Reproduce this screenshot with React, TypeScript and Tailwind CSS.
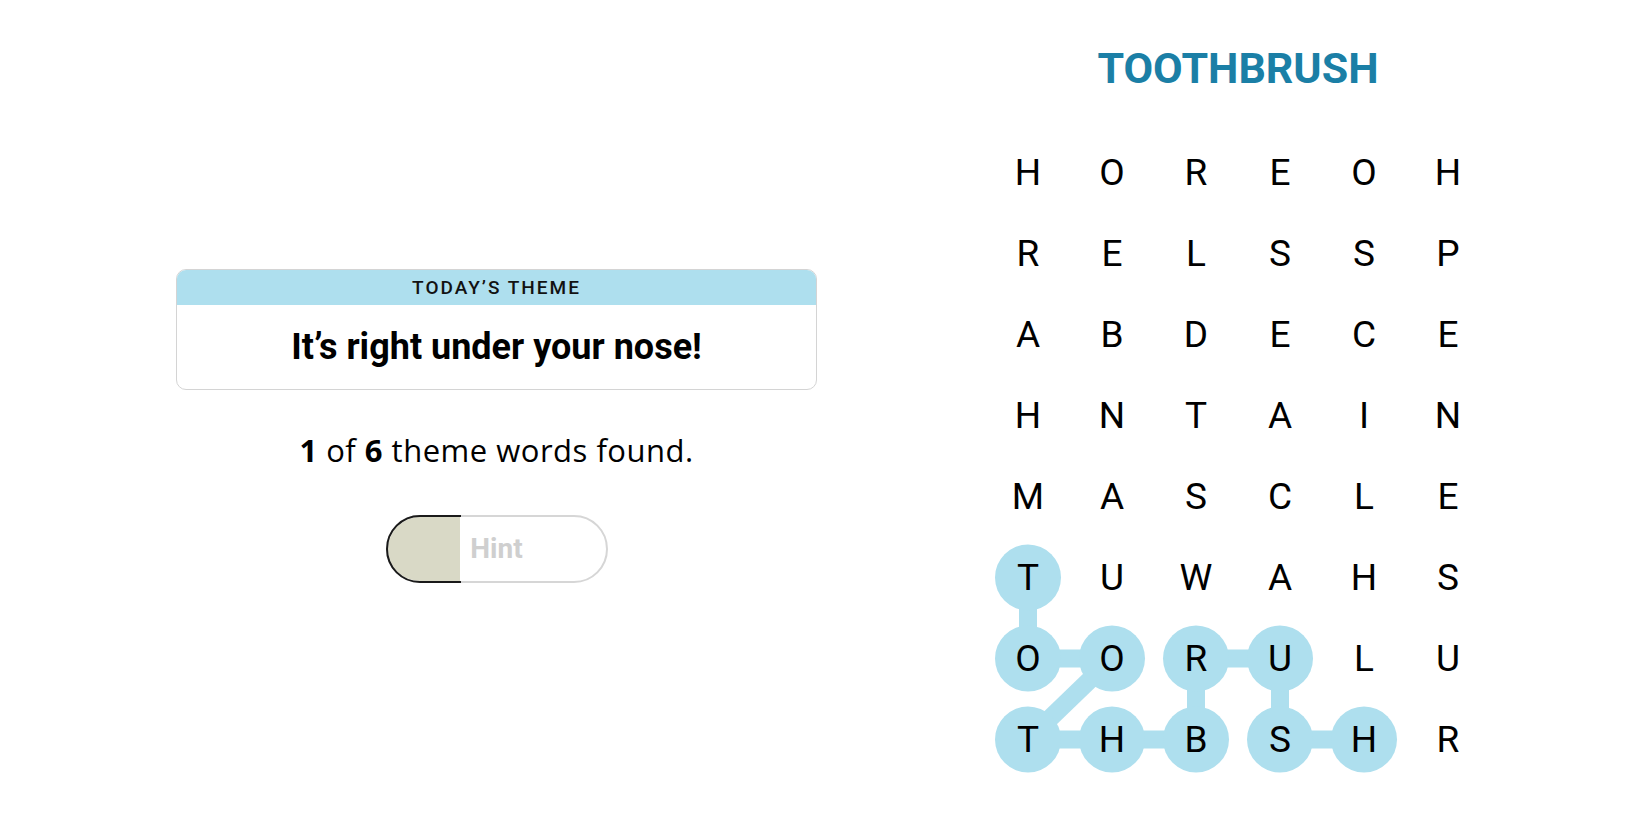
import React from "react"

const GRID = [
  "HOREOH",
  "RELSSP",
  "ABDECE",
  "HNTAIN",
  "MASCLE",
  "TUWAHS",
  "OORULU",
  "THBSHR",
]

// found word, in order of the letters
const FOUND: [number, number][] = [
  [5, 0],
  [6, 0],
  [6, 1],
  [7, 0],
  [7, 1],
  [7, 2],
  [6, 2],
  [6, 3],
  [7, 3],
  [7, 4],
]

const CELL_W = 84
const CELL_H = 81

const cx = (c: number) => CELL_W / 2 + c * CELL_W
const cy = (r: number) => CELL_H / 2 + r * CELL_H

function ThemeCard() {
  return (
    <div className="w-full rounded-[10px] border border-[#d4d4d4] overflow-hidden">
      <div className="h-[35px] bg-[#aedfee] flex items-center justify-center">
        <span className="text-[19px] leading-none font-medium tracking-[2px] text-[#121212]">
          TODAY’S THEME
        </span>
      </div>
      <div className="h-[84px] flex items-center justify-center">
        <h2 className="text-[36px] leading-none font-bold text-black">
          It’s right under your nose!
        </h2>
      </div>
    </div>
  )
}

function HintButton() {
  return (
    <button
      type="button"
      className="relative w-[222px] h-[68px] rounded-full border-2 border-[#d6d6d6] bg-white"
    >
      <span className="absolute left-0 top-0 bottom-0 w-[72px] rounded-l-[32px] bg-[#d9d9c6]" />
      <span className="absolute -left-[2px] -top-[2px] -bottom-[2px] w-[75px] overflow-hidden">
        <span className="block w-[222px] h-full rounded-full border-2 border-[#1a1a1a]" />
      </span>
      <span className="relative text-[28px] font-bold text-[#cfcfcf]">Hint</span>
    </button>
  )
}

function Board() {
  return (
    <div className="relative w-[504px] h-[648px]">
      <svg
        className="absolute inset-0"
        width={504}
        height={648}
        viewBox="0 0 504 648"
      >
        {FOUND.slice(1).map(([r, c], i) => {
          const [pr, pc] = FOUND[i]
          return (
            <line
              key={i}
              x1={cx(pc)}
              y1={cy(pr)}
              x2={cx(c)}
              y2={cy(r)}
              stroke="#aedfee"
              strokeWidth={18}
            />
          )
        })}
        {FOUND.map(([r, c], i) => (
          <circle key={i} cx={cx(c)} cy={cy(r)} r={33} fill="#aedfee" />
        ))}
      </svg>
      <div className="relative grid grid-cols-6">
        {GRID.map((row, r) =>
          row.split("").map((ch, c) => (
            <div
              key={`${r}-${c}`}
              className="w-[84px] h-[81px] flex items-center justify-center text-[37px] leading-none text-black"
            >
              {ch}
            </div>
          ))
        )}
      </div>
    </div>
  )
}

export default function App() {
  return (
    <div
      className="flex h-[825px] w-full bg-white overflow-hidden"
      style={{ fontFamily: "Roboto, 'Liberation Sans', sans-serif" }}
    >
      <section className="ml-[176px] w-[641px] pt-[269px] flex flex-col items-center">
        <ThemeCard />
        <p className="mt-[45px] text-[31px] leading-none tracking-[0.5px] text-black font-['Open_Sans',sans-serif]">
          <b>1</b> of <b>6</b> theme words found.
        </p>
        <div className="mt-[49px]">
          <HintButton />
        </div>
      </section>

      <section className="ml-[169px] w-[504px] flex flex-col items-center">
        <h1 className="mt-[47px] h-[43px] text-[43px] leading-none font-bold text-[#1b7fa6]">
          TOOTHBRUSH
        </h1>
        <div className="mt-[42px]">
          <Board />
        </div>
      </section>
    </div>
  )
}
